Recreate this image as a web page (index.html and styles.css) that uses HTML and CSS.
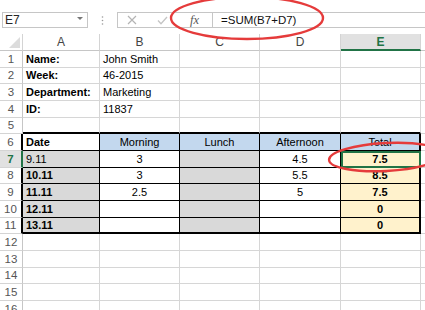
FILE: index.html
```html
<!DOCTYPE html>
<html>
<head>
<meta charset="utf-8">
<link rel="stylesheet" href="styles.css">
</head>
<body>
<div class="app">
  <div class="fbar">
    <div class="namebox"><span>E7</span><span class="caret"></span></div>
    <div class="dots"><svg width="3" height="9" viewBox="0 0 3 9"><circle cx="1.5" cy="1" r="0.8" fill="#9a9a9a"/><circle cx="1.5" cy="4.5" r="0.8" fill="#9a9a9a"/><circle cx="1.5" cy="8" r="0.8" fill="#9a9a9a"/></svg></div>
    <div class="fxgroup">
      <div class="btns">
        <svg class="ico-x" width="10" height="10" viewBox="0 0 10 10"><path d="M1 1L9 9M9 1L1 9" stroke="#b4b4b4" stroke-width="1.2" fill="none"/></svg>
        <svg class="ico-ok" width="11" height="9" viewBox="0 0 11 9"><path d="M1 4.5L4 7.8L10 1" stroke="#c4c4c4" stroke-width="1.3" fill="none"/></svg>
        <span class="fx">fx</span>
      </div>
      <div class="formula">=SUM(B7+D7)</div>
    </div>
  </div>
  <div class="sheet">
    <div class="corner"><span class="tri"></span></div>
    <div class="ch">A</div><div class="ch">B</div><div class="ch">C</div><div class="ch">D</div><div class="ch ch-sel">E</div><div class="ch"></div>

    <div class="rh">1</div><div class="c b">Name:</div><div class="c">John Smith</div><div class="c"></div><div class="c"></div><div class="c"></div><div class="c"></div>
    <div class="rh">2</div><div class="c b">Week:</div><div class="c">46-2015</div><div class="c"></div><div class="c"></div><div class="c"></div><div class="c"></div>
    <div class="rh">3</div><div class="c b">Department:</div><div class="c">Marketing</div><div class="c"></div><div class="c"></div><div class="c"></div><div class="c"></div>
    <div class="rh">4</div><div class="c b">ID:</div><div class="c">11837</div><div class="c"></div><div class="c"></div><div class="c"></div><div class="c"></div>
    <div class="rh">5</div><div class="c above"></div><div class="c above"></div><div class="c above"></div><div class="c above"></div><div class="c above"></div><div class="c"></div>

    <div class="rh edge">6</div><div class="t b">Date</div><div class="t blue ctr">Morning</div><div class="t blue ctr">Lunch</div><div class="t blue ctr">Afternoon</div><div class="t blue ctr last">Total</div><div class="c"></div>
    <div class="rh rh-sel">7</div><div class="t gray">9.11</div><div class="t ctr">3</div><div class="t gray"></div><div class="t ctr">4.5</div><div class="t yel ctr b last sel">7.5</div><div class="c"></div>
    <div class="rh edge">8</div><div class="t gray b">10.11</div><div class="t ctr">3</div><div class="t gray"></div><div class="t ctr">5.5</div><div class="t yel ctr b last">8.5</div><div class="c"></div>
    <div class="rh edge">9</div><div class="t gray b">11.11</div><div class="t ctr">2.5</div><div class="t gray"></div><div class="t ctr">5</div><div class="t yel ctr b last">7.5</div><div class="c"></div>
    <div class="rh edge">10</div><div class="t gray b">12.11</div><div class="t ctr"></div><div class="t gray"></div><div class="t ctr"></div><div class="t yel ctr b last">0</div><div class="c"></div>
    <div class="rh edge">11</div><div class="t gray b bot">13.11</div><div class="t ctr bot"></div><div class="t gray bot"></div><div class="t ctr bot"></div><div class="t yel ctr b last bot">0</div><div class="c"></div>

    <div class="rh">12</div><div class="c"></div><div class="c"></div><div class="c"></div><div class="c"></div><div class="c"></div><div class="c"></div>
    <div class="rh">13</div><div class="c"></div><div class="c"></div><div class="c"></div><div class="c"></div><div class="c"></div><div class="c"></div>
    <div class="rh">14</div><div class="c"></div><div class="c"></div><div class="c"></div><div class="c"></div><div class="c"></div><div class="c"></div>
    <div class="rh">15</div><div class="c"></div><div class="c"></div><div class="c"></div><div class="c"></div><div class="c"></div><div class="c"></div>
    <div class="rh">16</div><div class="c"></div><div class="c"></div><div class="c"></div><div class="c"></div><div class="c"></div><div class="c"></div>
  </div>
  <svg class="annot" width="425" height="310" viewBox="0 0 425 310">
    <ellipse cx="247" cy="18" rx="76" ry="21" fill="none" stroke="#e53b3b" stroke-width="2.4"/>
    <ellipse cx="386" cy="157" rx="57" ry="14" transform="rotate(-3 386 157)" fill="none" stroke="#e53b3b" stroke-width="2.4"/>
  </svg>
</div>
</body>
</html>
```

FILE: styles.css
```css
* { box-sizing: border-box; }
html, body { margin: 0; padding: 0; }
body {
  width: 425px;
  height: 310px;
  overflow: hidden;
  background: #fff;
  font-family: "Liberation Sans", Arial, sans-serif;
  font-size: 11px;
  color: #000;
}
.app { position: relative; width: 425px; height: 310px; overflow: hidden; }

.fbar {
  height: 34.33px;
  display: flex;
  align-items: flex-start;
  padding: 12px 0 0 2px;
}
.namebox {
  width: 86px;
  height: 16px;
  border: 1px solid #c6c6c6;
  display: flex;
  align-items: center;
  justify-content: space-between;
  padding: 0 4px 0 2px;
  font-size: 12px;
  color: #262626;
}
.caret {
  width: 0; height: 0;
  border-left: 3px solid transparent;
  border-right: 3px solid transparent;
  border-top: 3px solid #777;
  margin-bottom: 3px;
}
.dots {
  width: 29px;
  height: 16px;
  display: flex;
  align-items: center;
  justify-content: center;
}
.fxgroup {
  flex: 1;
  display: flex;
  height: 16px;
  border: 1px solid #c6c6c6;
  border-right: none;
}
.btns {
  width: 95px;
  display: flex;
  align-items: center;
  border-right: 1px solid #c6c6c6;
}
.ico-x { margin-left: 9px; }
.ico-ok { margin-left: 20px; }
.fx {
  margin-left: 22px;
  font-family: "Liberation Serif", serif;
  font-style: italic;
  font-size: 12.5px;
  color: #5a5a5a;
  line-height: 14px;
}
.formula {
  padding-left: 8px;
  line-height: 14px;
  font-size: 11.5px;
  color: #111;
}

.sheet {
  display: grid;
  grid-template-columns: 23px 77px 80px 80px 81px 80px 20px;
  grid-auto-rows: 16.667px;
  width: 441px;
}
.corner {
  position: relative;
  border-right: 1px solid #d4d4d4;
  border-bottom: 1px solid #c6c6c6;
}
.tri {
  position: absolute;
  right: 2px; bottom: 2px;
  width: 0; height: 0;
  border-left: 11px solid transparent;
  border-bottom: 11px solid #dcdcdc;
}
.ch {
  display: flex;
  align-items: center;
  justify-content: center;
  border-right: 1px solid #d4d4d4;
  border-bottom: 1px solid #c6c6c6;
  color: #444;
  font-size: 12px;
}
.ch-sel {
  background: #e1e1e1;
  color: #217346;
  font-weight: bold;
  border-bottom: 2px solid #217346;
}
.rh {
  display: flex;
  align-items: center;
  justify-content: center;
  border-right: 1px solid #c6c6c6;
  border-bottom: 1px solid #d4d4d4;
  color: #555;
  font-size: 11.5px;
}
.rh.edge { border-right: 2px solid #000; }
.rh-sel {
  background: #e1e1e1;
  color: #217346;
  font-weight: bold;
  border-right: 2px solid #217346;
}
.c {
  display: flex;
  align-items: center;
  padding-left: 3px;
  white-space: nowrap;
  border-right: 1px solid #d6d6d6;
  border-bottom: 1px solid #d6d6d6;
}
.c.above { border-bottom: 2px solid #000; }
.t {
  display: flex;
  align-items: center;
  padding-left: 3px;
  white-space: nowrap;
  border-right: 1px solid #000;
  border-bottom: 1px solid #000;
}
.t.last { border-right: 2px solid #000; }
.t.bot { border-bottom: 2px solid #000; }
.b { font-weight: bold; }
.ctr { justify-content: center; padding-left: 0; }
.blue { background: #c3d8ee; }
.gray { background: #d9d9d9; }
.yel { background: #fff2cc; }
.sel { outline: 2px solid #217346; outline-offset: -2px; }

.annot {
  position: absolute;
  left: 0; top: 0;
  pointer-events: none;
}
```
